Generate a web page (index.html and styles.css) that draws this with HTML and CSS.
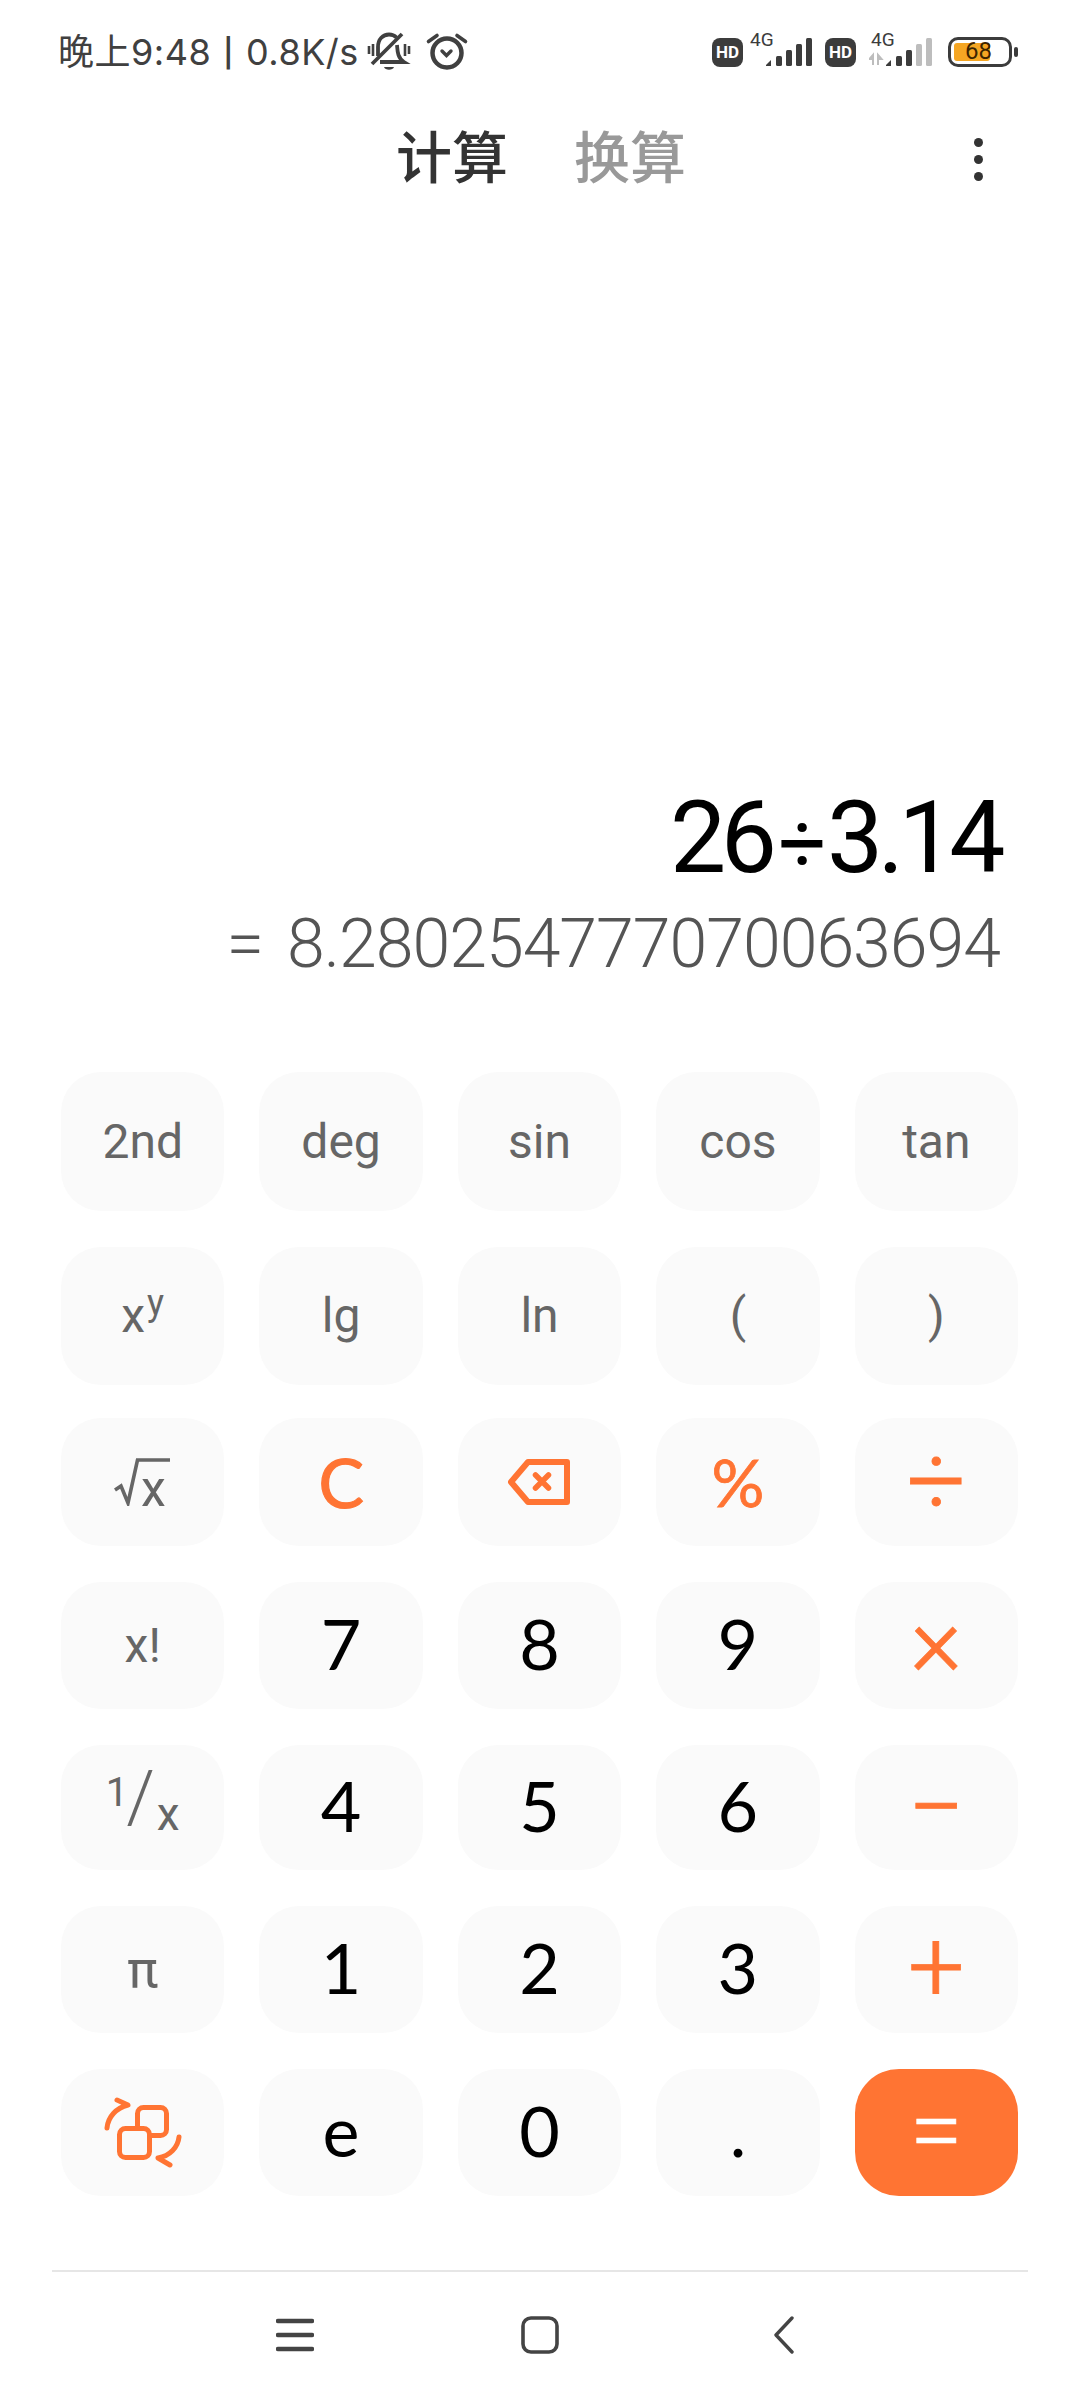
FILE: index.html
```html
<!DOCTYPE html>
<html lang="zh">

<head>
    <meta charset="UTF-8" />
    <meta name="viewport" content="width=device-width, initial-scale=1.0">
    <title>计算器</title>
    <link rel="stylesheet" href="styles.css">
</head>

<body>
    <!-- 状态栏 -->
    <div class="status">
        <span class="status-text">晚上9:48 <b class="status-bar">|</b> 0.8K/s</span>
        <svg class="icon-bell" width="44" height="40" viewBox="0 0 44 40" fill="none" stroke="#404040" stroke-width="3.8">
            <path d="M11 24V15C11 7 16 2.5 22 2.5C25 2.5 27.500 3.500 29.500 5.500" />
            <path d="M30 13C30.500 19 30.500 26 37 30H13" />
            <path d="M5 32L35 2" />
            <path d="M2 14V22M6 12V24M38 12V24M42 14V22" stroke-width="2.600" />
            <path d="M17 35H27C26 38.500 18 38.500 17 35Z" fill="#404040" stroke="none" />
        </svg>
        <svg class="icon-alarm" width="44" height="44" viewBox="0 0 44 44" fill="none" stroke="#404040" stroke-linecap="round">
            <circle cx="22" cy="23" r="14.500" stroke-width="4.500" />
            <path d="M3.500 11.500L12 5.500M32 5.500L40.500 11.500" stroke-width="3.600" />
            <path d="M17 21L21.500 25.500L26 21" stroke-width="3.400" />
        </svg>

        <div class="status-right">
            <span class="hd">HD</span>
            <svg class="signal signal-a" width="62" height="44" viewBox="0 -8 62 44">
                <text x="0" y="14" class="net">4G</text>
                <g fill="#3c3c3c">
                    <path d="M16 33L21 28V34H16Z" />
                    <rect x="26" y="24" width="6" height="10" rx="1.500" />
                    <rect x="36" y="18" width="6" height="16" rx="1.500" />
                    <rect x="46" y="12" width="6" height="22" rx="1.500" />
                    <rect x="56" y="6" width="6" height="28" rx="1.500" />
                </g>
            </svg>
            <span class="hd hd-b">HD</span>
            <svg class="signal signal-b" width="64" height="44" viewBox="0 -8 64 44">
                <text x="2" y="14" class="net">4G</text>
                <path d="M4 24V33M0.500 27L4 23V27ZM9 24V33M9 23L12.500 27H9Z" fill="#bdbdbd" stroke="#bdbdbd" stroke-width="2" />
                <g fill="#3c3c3c">
                    <path d="M17 33L22 28V34H17Z" />
                    <rect x="27" y="24" width="6" height="10" rx="1.500" />
                    <rect x="37" y="18" width="6" height="16" rx="1.500" />
                </g>
                <g fill="#bdbdbd">
                    <rect x="47" y="12" width="6" height="22" rx="1.500" />
                    <rect x="57" y="6" width="6" height="28" rx="1.500" />
                </g>
            </svg>
            <div class="battery">
                <div class="battery-body">
                    <span class="battery-fill"></span>
                    <span class="battery-num">68</span>
                </div>
                <span class="battery-nub"></span>
            </div>
        </div>
    </div>

    <!-- 标题 -->
    <div class="tabs">
        <span class="tab tab-on">计算</span>
        <span class="tab">换算</span>
        <div class="more"><i></i><i></i><i></i></div>
    </div>

    <!-- 显示区 -->
    <div class="display">
        <div class="expr">26<span class="expr-div">÷</span>3.14</div>
        <div class="result"><span class="result-eq">=</span>8.280254777070063694</div>
    </div>

    <!-- 按键 -->
    <div class="keys">
        <div class="key fn">2nd</div>
        <div class="key fn">deg</div>
        <div class="key fn">sin</div>
        <div class="key fn">cos</div>
        <div class="key fn">tan</div>

        <div class="key fn tall">x<sup class="pow">y</sup></div>
        <div class="key fn tall">lg</div>
        <div class="key fn tall">ln</div>
        <div class="key fn tall">(</div>
        <div class="key fn tall">)</div>

        <div class="key fn root">
            <svg width="58" height="48" viewBox="0 0 58 48" fill="none" stroke="#666" stroke-width="3.600">
                <path d="M1 32L7 28L14 45L23.500 2H56" />
            </svg>
            <span class="root-x">x</span>
        </div>
        <div class="key op op-c">C</div>
        <div class="key">
            <svg width="64" height="48" viewBox="0 0 64 48" fill="none" stroke="#ff7433" stroke-width="6" stroke-linejoin="round" stroke-linecap="round">
                <path d="M21 4H60V44H21L4 24Z" />
                <path d="M28.500 17L41.500 30M41.500 17L28.500 30" stroke-width="5.500" />
            </svg>
        </div>
        <div class="key op op-pct">%</div>
        <div class="key op op-div">÷</div>

        <div class="key fn">x!</div>
        <div class="key num">7</div>
        <div class="key num">8</div>
        <div class="key num">9</div>
        <div class="key op op-mul">×</div>

        <div class="key fn frac"><span class="frac-1">1</span><span class="frac-s">/</span><span class="frac-x">x</span></div>
        <div class="key num">4</div>
        <div class="key num">5</div>
        <div class="key num">6</div>
        <div class="key op op-sub">−</div>

        <div class="key fn pi">π</div>
        <div class="key num">1</div>
        <div class="key num">2</div>
        <div class="key num">3</div>
        <div class="key op op-add">+</div>

        <div class="key">
            <svg width="86" height="76" viewBox="0 0 86 76" fill="none" stroke="#ff7433" stroke-width="5" stroke-linecap="round" stroke-linejoin="round">
                <rect x="37.500" y="12.500" width="29" height="28" rx="6" />
                <rect x="19.500" y="33.500" width="30" height="29" rx="6" fill="#fafafa" />
                <path d="M7 33C8 22 16 13 28 10L17 5" />
                <path d="M79 42C78 52 70 61 58 63L70 70" />
            </svg>
        </div>
        <div class="key num">e</div>
        <div class="key num">0</div>
        <div class="key num">.</div>
        <div class="key eq">=</div>
    </div>

    <!-- 导航栏 -->
    <div class="nav">
        <div class="nav-cell">
            <svg width="38" height="36" viewBox="0 0 38 36" stroke="#444" stroke-width="4.400" stroke-linecap="round">
                <path d="M2 4H36M2 18H36M2 32H36" />
            </svg>
        </div>
        <div class="nav-cell">
            <svg width="38" height="38" viewBox="0 0 38 38" fill="none" stroke="#444" stroke-width="3.600">
                <rect x="2" y="2" width="34" height="34" rx="8" />
            </svg>
        </div>
        <div class="nav-cell nav-back">
            <svg width="20" height="38" viewBox="0 0 20 38" fill="none" stroke="#444" stroke-width="3.400" stroke-linecap="round" stroke-linejoin="round">
                <path d="M18 2L2 19L18 36" />
            </svg>
        </div>
    </div>
</body>

</html>
```

FILE: styles.css
```css
* {
    margin: 0;
    padding: 0;
    box-sizing: border-box;
}

body {
    width: 1080px;
    height: 2400px;
    overflow: hidden;
    background-color: #fff;
    font-family: Roboto, "Noto Sans CJK SC", sans-serif;
}

/* 状态栏 */
.status {
    height: 104px;
    padding: 0 62px 0 58px;
    display: flex;
    align-items: center;
    color: #404040;
}

.status-text {
    font-family: Inter, "Noto Sans CJK SC", sans-serif;
    font-size: 36px;
    line-height: 40px;
    letter-spacing: 0.5px;
    white-space: nowrap;
}

.status-bar {
    margin: 0 1.500px;
    font-size: 28px;
    font-weight: 600;
    vertical-align: 2px;
}

.icon-bell {
    margin-left: 8px;
}

.icon-alarm {
    margin-left: 14px;
}

.status-right {
    margin-left: auto;
    display: flex;
    align-items: center;
}

.hd {
    width: 31px;
    height: 29px;
    border-radius: 8px;
    background-color: #3c3c3c;
    color: #fff;
    font-size: 17px;
    font-weight: 700;
    line-height: 29px;
    text-align: center;
}

.hd-b {
    margin-left: 13px;
}

.signal {
    margin-left: 7px;
    margin-top: -12px;
}

.signal-b {
    margin-left: 13px;
}

.net {
    font-family: Roboto, sans-serif;
    font-size: 19px;
    fill: #3c3c3c;
}

.battery {
    margin-left: 15px;
    display: flex;
    align-items: center;
}

.battery-body {
    position: relative;
    width: 64px;
    height: 30px;
    border: 3.5px solid #3c3c3c;
    border-radius: 10px;
}

.battery-fill {
    position: absolute;
    left: 3px;
    top: 3px;
    bottom: 3px;
    width: 36px;
    border-radius: 3px;
    background-color: #f5a623;
}

.battery-num {
    position: absolute;
    left: 14px;
    top: 0;
    font-size: 24px;
    line-height: 23px;
    color: #3d2400;
}

.battery-nub {
    width: 4px;
    height: 10px;
    margin-left: 2px;
    border-radius: 2px;
    background-color: #3c3c3c;
}

/* 标题 */
.tabs {
    height: 108px;
    padding: 2px 97px 0 396px;
    display: flex;
    align-items: center;
    gap: 66px;
}

.tab {
    font-size: 56px;
    font-weight: 500;
    line-height: 60px;
    color: #999;
}

.tab-on {
    color: #333;
}

.more {
    margin-left: auto;
    display: flex;
    flex-direction: column;
    gap: 8px;
}

.more i {
    width: 9px;
    height: 9px;
    border-radius: 50%;
    background-color: #333;
}

/* 显示区 */
.display {
    height: 860px;
    padding: 0 80px 88px 0;
    display: flex;
    flex-direction: column;
    justify-content: flex-end;
    align-items: flex-end;
}

.expr {
    font-size: 100px;
    line-height: 120px;
    letter-spacing: -5.500px;
    color: #000;
}

.expr-div {
    font-size: 84px;
    margin: 0 6px 0 7px;
}

.result {
    font-size: 68px;
    font-weight: 300;
    line-height: 80px;
    letter-spacing: -1px;
    color: #555;
}

.result-eq {
    margin-right: 24px;
}

/* 按键 */
.keys {
    margin: 0 62px 0 61px;
    display: grid;
    grid-template-columns: repeat(5, 1fr);
    grid-template-rows: 139px 135px 128px 127px 125px 127px 127px;
    column-gap: 35px;
    row-gap: 36px;
}

.key {
    border-radius: 40px;
    background-color: #fafafa;
    display: flex;
    align-items: center;
    justify-content: center;
    line-height: 1;
}

/* 第二行按键比轨道高3px */
.tall {
    margin-bottom: -3px;
}

.fn {
    font-size: 48px;
    color: #666;
}

.num {
    padding-bottom: 5px;
    font-family: Lato, sans-serif;
    font-size: 70px;
    color: #000;
}

.op {
    color: #ff7433;
    font-weight: 300;
    -webkit-text-stroke: 0.8px #ff7433;
}

.op-c {
    font-family: Lato, sans-serif;
    font-size: 68px;
    font-weight: 400;
    -webkit-text-stroke: 1.2px #ff7433;
}

.op-pct {
    font-family: Lato, sans-serif;
    font-size: 66px;
    font-weight: 400;
}

.op-div {
    font-size: 104px;
}

.op-mul {
    padding-bottom: 10px;
    font-size: 100px;
}

.op-sub {
    font-size: 100px;
}

.op-add {
    padding-bottom: 6px;
    font-size: 100px;
}

.eq {
    padding-bottom: 6px;
    border-radius: 44px;
    background-color: #ff7433;
    color: #fff;
    font-size: 96px;
    font-weight: 300;
    -webkit-text-stroke: 0.6px #fff;
}

.pow {
    font-size: 36px;
    line-height: 1;
    margin-top: -26px;
    margin-left: 2px;
}

.root {
    position: relative;
    font-size: 50px;
}

.root-x {
    position: absolute;
    left: 80px;
    top: 46px;
}

.frac {
    align-items: flex-end;
    padding-bottom: 36px;
}

.frac-1 {
    font-size: 40px;
    margin-bottom: 21px;
}

.frac-s {
    font-size: 72px;
    font-weight: 300;
    margin: 0 2px 0 -2px;
}

.frac-x {
    font-size: 46px;
    margin-bottom: -3px;
}

.pi {
    font-size: 52px;
}

/* 导航栏 */
.nav {
    margin: 74px 52px 0;
    height: 128px;
    border-top: 2px solid #e6e6e6;
    display: grid;
    grid-template-columns: repeat(3, 245px);
    justify-content: center;
}

.nav-cell {
    display: flex;
    align-items: center;
    justify-content: center;
}

.nav-back {
    padding-right: 3px;
}
```
